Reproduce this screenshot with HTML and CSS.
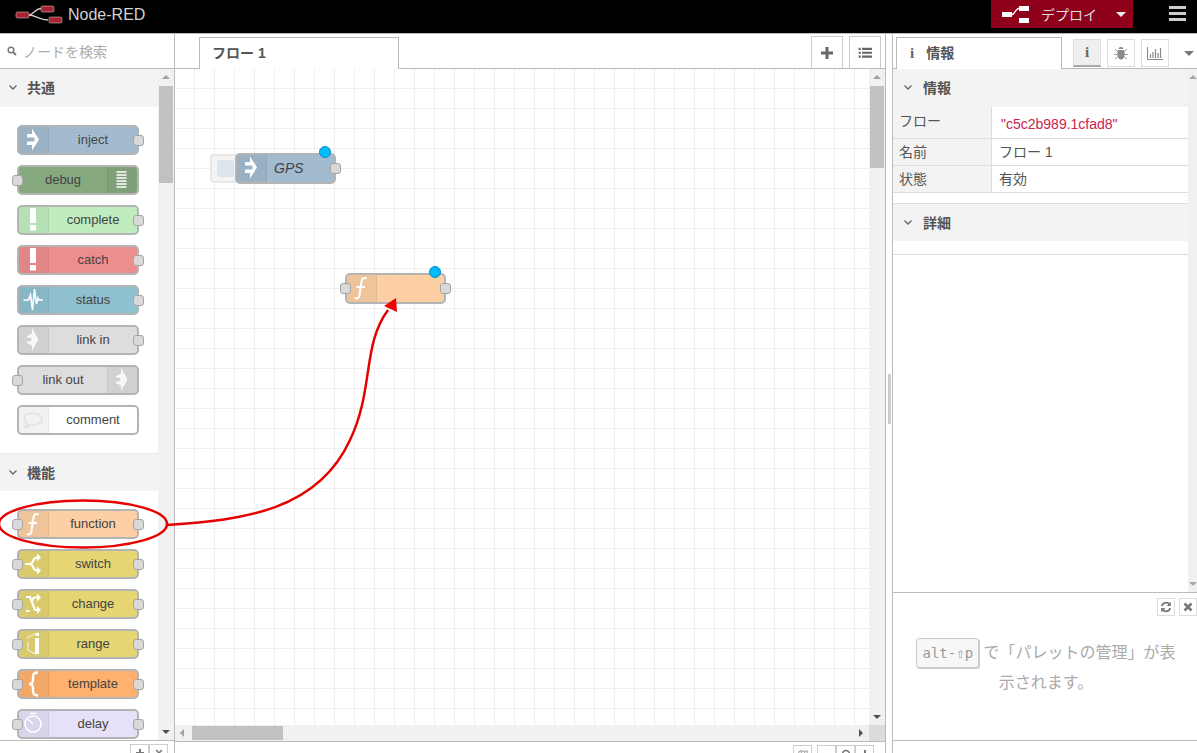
FILE: index.html
```html
<!DOCTYPE html>
<html lang="ja">
<head>
    <meta charset="UTF-8">
    <meta name="viewport" content="width=device-width, initial-scale=1.0">
    <title>Node-RED</title>
    <link rel="stylesheet" href="styles.css">
</head>
<body>

<svg class="defs" width="0" height="0">
    <symbol id="ic-inject" viewBox="0 0 32 30"><path fill="#fff" d="M15 3.500L22 14.500L15 25.500V20H10V16.500H17.500V12.500H10V9H15Z"/></symbol>
    <symbol id="ic-debug" viewBox="0 0 32 30"><path fill="none" stroke="#fff" stroke-width="1.500" d="M10.500 7H20.500M10.500 10H20.500M10.500 13H20.500M10.500 16H20.500M10.500 19H20.500M10.500 22H20.500"/></symbol>
    <symbol id="ic-alert" viewBox="0 0 32 30"><path fill="#fff" d="M13 3H19V18H13ZM13 20H19V25.500H13Z"/></symbol>
    <symbol id="ic-status" viewBox="0 0 32 30"><path fill="none" stroke="#fff" stroke-width="1.600" d="M6.500 15H11.500L13.500 10L15.500 25L17.500 4L19.500 19L21 13L22 15H26"/></symbol>
    <symbol id="ic-link" viewBox="0 0 32 30"><path fill="#fff" opacity=".85" d="M15 3L21.500 14.500L15 26V20.500L10 18V16.500H12.500A2 2 0 0 0 12.500 12.500H10V11L15 8.500Z"/></symbol>
    <symbol id="ic-comment" viewBox="0 0 32 30"><path fill="none" stroke="#ddd" stroke-width="1.200" d="M16 8C22 8 25 11 25 14C25 17.500 21 20 16 20C15 20 14 20 13 19.800C12 21.500 10 22.500 8 22.500C9 21.500 10 20 10 18.500C8 17.500 7 16 7 14C7 11 10 8 16 8Z"/></symbol>
    <symbol id="ic-function" viewBox="0 0 32 30"><path fill="none" stroke="#fff" stroke-width="2" d="M21.500 5.500C18.500 4 17 5.500 16.500 8.500L14.500 22C14 25 12.500 26 10 25M11.500 14H20"/></symbol>
    <symbol id="ic-switch" viewBox="0 0 32 30"><path fill="none" stroke="#fff" stroke-width="2.200" d="M8 15H13C15.500 15 16 12 17 10L19 8.500H21M13 15C15.500 15 16 18 17 20L19 21.500H21"/><path fill="#fff" d="M20 4.500L24 8.500L20 12.500ZM20 17.500L24 21.500L20 25.500Z"/></symbol>
    <symbol id="ic-change" viewBox="0 0 32 30"><path fill="none" stroke="#fff" stroke-width="2.200" d="M9 8H13L18 21H21M9 22H12.500M15 11.500L17 8.500H21"/><path fill="#fff" d="M20 4.500L24 8.500L20 12.500ZM20 17L24 21L20 25Z"/></symbol>
    <symbol id="ic-range" viewBox="0 0 32 30"><path fill="#fff" d="M18 9H22V25H18ZM18.500 4H22V7H18.500Z"/><path fill="none" stroke="#fff" stroke-width="1.200" opacity=".7" d="M11 8V10M11 13V21M11 21L18 25M11 8L18 5"/></symbol>
    <symbol id="ic-template" viewBox="0 0 32 30"><path fill="none" stroke="#fff" stroke-width="2.400" d="M21 3.500C17 3.500 16 5 16 8V11C16 13.500 15 15 12 15C15 15 16 16.500 16 19V22C16 25 17 26.500 21 26.500"/></symbol>
    <symbol id="ic-delay" viewBox="0 0 32 30"><circle cx="16" cy="15" r="8" fill="none" stroke="#fff" stroke-width="1.500"/><path fill="none" stroke="#fff" stroke-width="1.500" d="M16 15L11.500 10.500M13 4.500H19"/></symbol>
    <symbol id="ic-chevron" viewBox="0 0 10 10"><path fill="none" stroke="#666" stroke-width="1.300" d="M1.500 3.500L5 7L8.500 3.500"/></symbol>
    <symbol id="ic-deploy" viewBox="0 0 28 18"><path fill="#fff" d="M0 7H10V12H0ZM17 1H27V6H17ZM17 13H27V18H17Z"/><path fill="none" stroke="#fff" stroke-width="1.300" d="M10 9.500C13 9.500 13 3.500 17 3.500"/></symbol>
    <symbol id="ic-plus" viewBox="0 0 10 10"><path fill="#777" d="M4 1H6V4H9V6H6V9H4V6H1V4H4Z"/></symbol>
    <symbol id="ic-minus" viewBox="0 0 10 10"><path fill="#777" d="M1 4H9V6H1Z"/></symbol>
    <symbol id="ic-close" viewBox="0 0 10 10"><path stroke="#777" stroke-width="1.500" d="M2 2L8 8M8 2L2 8"/></symbol>
    <symbol id="ic-reset" viewBox="0 0 10 10"><circle cx="5" cy="5" r="3.500" fill="none" stroke="#777" stroke-width="1.500"/></symbol>
    <symbol id="ic-map" viewBox="0 0 12 10"><path fill="none" stroke="#888" d="M1 2L4 1L8 2L11 1V9L8 10L4 9L1 10ZM4 1V9M8 2V10"/></symbol>
</svg>

<header class="topbar">
    <div class="brand">
        <svg class="brand-logo" width="48" height="20" viewBox="0 0 48 20">
            <path fill="none" stroke="#ccc" stroke-width="1.300" d="M13 10C19 10 20 3.500 26 3.500M13 10C21 10 24 15 33 15"/>
            <rect x="1" y="7" width="13" height="6" rx="1.500" fill="#a8232f" stroke="#ddd" stroke-width=".5"/>
            <rect x="26" y="1" width="13" height="6" rx="1.500" fill="#a8232f" stroke="#ddd" stroke-width=".5"/>
            <rect x="34" y="12" width="13" height="6" rx="1.500" fill="#a8232f" stroke="#ddd" stroke-width=".5"/>
        </svg>
        <span>Node-RED</span>
    </div>
    <div class="deploy">
        <svg class="deploy-icon" width="28" height="18"><use href="#ic-deploy"/></svg>
        <span class="deploy-label">デプロイ</span>
        <span class="caret caret-white"></span>
    </div>
    <div class="menu-btn"><span></span><span></span><span></span></div>
</header>

<div class="main">
    <aside class="palette">
        <div class="search">
            <svg width="10" height="10" viewBox="0 0 10 10"><circle cx="4" cy="4" r="2.800" fill="none" stroke="#777" stroke-width="1.500"/><path stroke="#777" stroke-width="1.800" d="M6 6L9 9"/></svg>
            <span>ノードを検索</span>
        </div>
        <div class="palette-body">
            <div class="palette-list">
                <div class="category"><svg class="chevron"><use href="#ic-chevron"/></svg>共通</div>
                <div class="category-nodes">
                    <div class="node c-inject"><span class="icon"><svg><use href="#ic-inject"/></svg></span><span class="node-label">inject</span><i class="port port-out"></i></div>
                    <div class="node c-debug"><i class="port port-in"></i><span class="node-label">debug</span><span class="icon icon-right"><svg><use href="#ic-debug"/></svg></span></div>
                    <div class="node c-complete"><span class="icon"><svg><use href="#ic-alert"/></svg></span><span class="node-label">complete</span><i class="port port-out"></i></div>
                    <div class="node c-catch"><span class="icon"><svg><use href="#ic-alert"/></svg></span><span class="node-label">catch</span><i class="port port-out"></i></div>
                    <div class="node c-status"><span class="icon"><svg><use href="#ic-status"/></svg></span><span class="node-label">status</span><i class="port port-out"></i></div>
                    <div class="node c-link"><span class="icon"><svg><use href="#ic-link"/></svg></span><span class="node-label">link in</span><i class="port port-out"></i></div>
                    <div class="node c-link"><i class="port port-in"></i><span class="node-label">link out</span><span class="icon icon-right"><svg><use href="#ic-link"/></svg></span></div>
                    <div class="node c-comment"><span class="icon"><svg><use href="#ic-comment"/></svg></span><span class="node-label">comment</span></div>
                </div>
                <div class="category category-next"><svg class="chevron"><use href="#ic-chevron"/></svg>機能</div>
                <div class="category-nodes">
                    <div class="node c-function"><i class="port port-in"></i><span class="icon"><svg><use href="#ic-function"/></svg></span><span class="node-label">function</span><i class="port port-out"></i></div>
                    <div class="node c-yellow"><i class="port port-in"></i><span class="icon"><svg><use href="#ic-switch"/></svg></span><span class="node-label">switch</span><i class="port port-out"></i></div>
                    <div class="node c-yellow"><i class="port port-in"></i><span class="icon"><svg><use href="#ic-change"/></svg></span><span class="node-label">change</span><i class="port port-out"></i></div>
                    <div class="node c-yellow"><i class="port port-in"></i><span class="icon"><svg><use href="#ic-range"/></svg></span><span class="node-label">range</span><i class="port port-out"></i></div>
                    <div class="node c-template"><i class="port port-in"></i><span class="icon"><svg><use href="#ic-template"/></svg></span><span class="node-label">template</span><i class="port port-out"></i></div>
                    <div class="node c-delay"><i class="port port-in"></i><span class="icon"><svg><use href="#ic-delay"/></svg></span><span class="node-label">delay</span><i class="port port-out"></i></div>
                </div>
            </div>
            <div class="vscroll">
                <span class="arrow arrow-up"></span>
                <span class="thumb thumb-palette"></span>
                <span class="arrow arrow-down"></span>
            </div>
        </div>
        <div class="palette-footer">
            <span class="foot-btn"><svg><use href="#ic-plus"/></svg></span><span class="foot-btn"><svg><use href="#ic-close"/></svg></span>
        </div>
    </aside>

    <section class="workspace">
        <div class="tabbar">
            <div class="tab">フロー 1</div>
            <div class="tabbar-btns">
                <span class="square-btn">
                    <svg width="14" height="14" viewBox="0 0 14 14"><path fill="#666" d="M5.500 1H8.500V5.500H13V8.500H8.500V13H5.500V8.500H1V5.500H5.500Z"/></svg>
                </span>
                <span class="square-btn">
                    <svg width="15" height="12" viewBox="0 0 16 14"><path fill="#666" d="M0 1H2.500V3.500H0ZM4 1H15.500V3.500H4ZM0 5.500H2.500V8H0ZM4 5.500H15.500V8H4ZM0 10H2.500V12.500H0ZM4 10H15.500V12.500H4Z"/></svg>
                </span>
            </div>
        </div>
        <div class="canvas-row">
            <div class="chart">
                <div class="flow-node flow-gps">
                    <span class="inject-btn"><span></span></span>
                    <div class="node c-inject"><span class="icon"><svg><use href="#ic-inject"/></svg></span><span class="node-label flow-label">GPS</span><i class="port port-out"></i><b class="changed"></b></div>
                </div>
                <div class="flow-node flow-func">
                    <div class="node c-function"><i class="port port-in"></i><span class="icon"><svg><use href="#ic-function"/></svg></span><span class="node-label"></span><i class="port port-out"></i><b class="changed"></b></div>
                </div>
            </div>
            <div class="vscroll">
                <span class="arrow arrow-up"></span>
                <span class="thumb thumb-chart"></span>
                <span class="arrow arrow-down"></span>
            </div>
        </div>
        <div class="hscroll">
            <span class="arrow arrow-left"></span>
            <span class="thumb thumb-h"></span>
            <span class="arrow arrow-right"></span>
            <span class="scroll-corner"></span>
        </div>
        <div class="workspace-footer">
            <span class="foot-btn"><svg><use href="#ic-map"/></svg></span>
            <span class="zoom-group">
                <span class="foot-btn"><svg><use href="#ic-minus"/></svg></span><span class="foot-btn"><svg><use href="#ic-reset"/></svg></span><span class="foot-btn"><svg><use href="#ic-plus"/></svg></span>
            </span>
        </div>
    </section>

    <div class="splitter"><span></span></div>

    <aside class="sidebar">
        <div class="tabbar tabbar-side">
            <div class="tab tab-side"><span class="info-i info-i-tab">i</span>情報</div>
            <div class="side-btns">
                <span class="side-btn side-btn-active"><span class="info-i">i</span></span>
                <span class="side-btn">
                    <svg width="14" height="14" viewBox="0 0 14 14"><path fill="#8a8a8a" d="M4.500 3A2.500 2 0 0 1 9.500 3ZM4 4H10C11 6 11 10 10 11.500C9 13 8 13.500 7 13.500C6 13.500 5 13 4 11.500C3 10 3 6 4 4Z"/><path stroke="#999" fill="none" d="M1 3L3.500 5.500M13 3L10.500 5.500M0 8.500H3M14 8.500H11M1 13L3.500 11M13 13L10.500 11"/></svg>
                </span>
                <span class="side-btn">
                    <svg width="16" height="14" viewBox="0 0 16 14"><path fill="none" stroke="#888" d="M.500 1V13.500H16"/><path fill="none" stroke="#888" stroke-width="1.200" d="M3.500 12V8M6 12V6M8.500 12V3M11 12V7M13.500 12V2"/></svg>
                </span>
            </div>
            <span class="caret caret-side"></span>
        </div>
        <div class="side-upper">
            <div class="side-content">
                <div class="side-section"><svg class="chevron"><use href="#ic-chevron"/></svg>情報</div>
                <table class="info-table">
                    <tr class="row-id"><th>フロー</th><td class="flow-id">"c5c2b989.1cfad8"</td></tr>
                    <tr><th>名前</th><td>フロー 1</td></tr>
                    <tr><th>状態</th><td>有効</td></tr>
                </table>
                <div class="side-section side-section-next"><svg class="chevron"><use href="#ic-chevron"/></svg>詳細</div>
                <div class="side-rest"></div>
            </div>
            <div class="side-scroll">
                <span class="arrow arrow-up arrow-pale"></span>
                <span class="arrow arrow-down arrow-pale"></span>
            </div>
        </div>
        <div class="tips">
            <div class="tips-btns">
                <span class="tip-btn">
                    <svg width="12" height="12" viewBox="0 0 12 12"><path fill="none" stroke="#777" stroke-width="1.800" d="M1.800 5A4.300 4.300 0 0 1 9.500 3.500M10.200 7A4.300 4.300 0 0 1 2.500 8.500"/><path fill="#777" d="M10.800 .8V5H6.600ZM1.200 11.200V7H5.400Z"/></svg>
                </span>
                <span class="tip-btn">
                    <svg width="10" height="10" viewBox="0 0 10 10"><path stroke="#777" stroke-width="2.600" d="M1.500 1.500L8.500 8.500M8.500 1.500L1.500 8.500"/></svg>
                </span>
            </div>
            <p class="tip-text"><kbd>alt-⇧p</kbd> で「パレットの管理」が表示されます。</p>
        </div>
        <div class="side-footer"></div>
    </aside>
</div>

<!-- annotation drawn over the screenshot -->
<svg class="annotation" width="1197" height="753" viewBox="0 0 1197 753">
    <ellipse cx="83" cy="524" rx="84" ry="23.500" fill="none" stroke="#e60000" stroke-width="2.500"/>
    <path fill="none" stroke="#e60000" stroke-width="2.500" d="M167 525C245 520 318 510 350 440C374 390 362 345 388 310"/>
    <path fill="#f00000" d="M396 298L397 312L384 306Z"/>
</svg>

</body>
</html>
```

FILE: styles.css
```css
* {
    box-sizing: border-box;
}

html,
body {
    margin: 0;
    height: 100%;
    overflow: hidden;
}

body {
    position: relative;
    font-family: "Liberation Sans", "Noto Sans CJK JP", sans-serif;
    font-size: 14px;
    color: #555;
    background-color: #fff;
}

.defs {
    position: absolute;
}

/* header */
.topbar {
    display: flex;
    align-items: flex-start;
    height: 34px;
    background-color: #000;
    border-bottom: 1px solid #bbb;
}

.brand {
    display: flex;
    align-items: center;
    gap: 5px;
    height: 30px;
    padding-left: 15px;
    margin-right: auto;
    font-size: 16px;
    color: #d2d2d2;
}

.deploy {
    display: flex;
    align-items: center;
    width: 142px;
    height: 28px;
    padding-left: 11px;
    background-color: #8f001b;
    color: #ddd;
}

.deploy-label {
    margin-left: 11px;
    margin-right: 19px;
}

.menu-btn {
    display: flex;
    flex-direction: column;
    gap: 3px;
    width: 17px;
    margin: 6px 11px 0 36px;
}

.menu-btn span {
    height: 3px;
    background-color: #ccc;
}

.caret {
    width: 0;
    height: 0;
    border-left: 5px solid transparent;
    border-right: 5px solid transparent;
    border-top: 5px solid #777;
}

.caret-white {
    border-top-color: #eee;
}

/* layout */
.main {
    display: flex;
    height: 719px;
}

.palette {
    display: flex;
    flex-direction: column;
    width: 175px;
    border-right: 1px solid #bbb;
}

.search {
    display: flex;
    align-items: center;
    gap: 6px;
    height: 35px;
    padding-left: 7px;
    border-bottom: 1px solid #bbb;
    color: #aaa;
}

.palette-body {
    display: flex;
    height: 672px;
    border-bottom: 1px solid #bbb;
}

.palette-list {
    width: 158px;
    overflow: hidden;
}

.category {
    display: flex;
    align-items: center;
    height: 38px;
    padding: 0 0 2px 8px;
    background-color: #f3f3f3;
    font-weight: bold;
    font-size: 14px;
    color: #555;
}

.category-next {
    border-top: 1px solid #e8e8e8;
}

.chevron {
    width: 10px;
    height: 10px;
    margin-right: 9px;
}

.category-nodes {
    display: flex;
    flex-direction: column;
    gap: 10px;
    padding: 18px 0 18px 17px;
}

/* nodes */
.node {
    position: relative;
    display: flex;
    align-items: center;
    width: 122px;
    height: 30px;
    border: 2px solid #b4b4b4;
    border-radius: 5px;
}

.icon {
    flex: none;
    width: 30px;
    height: 100%;
    background-color: rgba(0, 0, 0, 0.05);
    border-right: 1px solid rgba(0, 0, 0, 0.05);
    border-radius: 3px 0 0 3px;
}

.icon-right {
    border-right: none;
    border-left: 1px solid rgba(0, 0, 0, 0.05);
    border-radius: 0 3px 3px 0;
}

/* the symbols are drawn on the outer 32x30 box of the node */
.icon svg {
    display: block;
    width: 32px;
    height: 30px;
    margin: -2px 0 0 -2px;
    overflow: visible;
}

.node-label {
    flex: 1;
    padding-bottom: 2px;
    text-align: center;
    color: #444;
    font-size: 13px;
}

.port {
    position: absolute;
    top: 8px;
    width: 11px;
    height: 11px;
    background-color: #d9d9d9;
    border: 1px solid #a5a5a5;
    border-radius: 3px;
}

.port-in {
    left: -7px;
}

.port-out {
    right: -7px;
}

.c-inject { background-color: #a3bbcf; }
.c-debug { background-color: #87a980; }
.c-complete { background-color: #c0edc0; }
.c-catch { background-color: #ec8e8e; }
.c-status { background-color: #8fc1d0; }
.c-link { background-color: #ddd; }
.c-comment { background-color: #fff; }
.c-function { background-color: #fdcfa4; }
.c-yellow { background-color: #e5d673; }
.c-template { background-color: #ffb16d; }
.c-delay { background-color: #e6e0f8; }

/* scrollbars */
.vscroll {
    position: relative;
    flex: none;
    width: 16px;
    background-color: #f1f1f1;
}

.thumb {
    position: absolute;
    background-color: #c1c1c1;
}

.thumb-palette {
    top: 17px;
    left: 1px;
    width: 14px;
    height: 97px;
}

.thumb-chart {
    top: 17px;
    left: 1px;
    width: 14px;
    height: 82px;
}

.thumb-h {
    top: 1px;
    left: 17px;
    width: 91px;
    height: 14px;
}

.arrow {
    position: absolute;
    width: 0;
    height: 0;
}

.arrow-up {
    top: 6px;
    left: 4px;
    border-left: 4px solid transparent;
    border-right: 4px solid transparent;
    border-bottom: 4px solid #a3a3a3;
}

.arrow-down {
    bottom: 6px;
    left: 4px;
    border-left: 4px solid transparent;
    border-right: 4px solid transparent;
    border-top: 4px solid #505050;
}

.arrow-left {
    top: 4px;
    left: 5px;
    border-top: 4px solid transparent;
    border-bottom: 4px solid transparent;
    border-right: 4px solid #a3a3a3;
}

.arrow-right {
    top: 4px;
    right: 22px;
    border-top: 4px solid transparent;
    border-bottom: 4px solid transparent;
    border-left: 4px solid #505050;
}

.arrow-pale {
    left: 1px;
    border-bottom-color: #aaa;
    border-top-color: #aaa;
}

/* workspace */
.workspace {
    display: flex;
    flex-direction: column;
    width: 710px;
}

.tabbar {
    display: flex;
    align-items: flex-end;
    height: 35px;
    padding-left: 24px;
    border-bottom: 1px solid #bbb;
}

.tab {
    position: relative;
    top: 1px;
    flex: none;
    width: 200px;
    height: 32px;
    padding: 4px 0 0 12px;
    background-color: #fff;
    border: 1px solid #bbb;
    border-bottom: none;
    font-weight: bold;
    font-size: 14px;
    color: #555;
}

.tabbar-btns {
    display: flex;
    gap: 6px;
    margin-left: auto;
    margin-right: 4px;
}

.square-btn {
    display: flex;
    align-items: center;
    justify-content: center;
    width: 32px;
    height: 32px;
    border: 1px solid #ccc;
    border-bottom: none;
}

.canvas-row {
    display: flex;
    height: 656px;
}

.chart {
    position: relative;
    flex: 1;
    overflow: hidden;
    background-color: #fff;
    background-image:
        linear-gradient(#eee 1px, transparent 1px),
        linear-gradient(90deg, #eee 1px, transparent 1px);
    background-size: 20px 20px;
    background-position: 19px 19px;
}

.hscroll {
    position: relative;
    height: 16px;
    background-color: #f1f1f1;
}

.scroll-corner {
    position: absolute;
    top: 0;
    right: 0;
    width: 16px;
    height: 16px;
    background-color: #dcdcdc;
}

.workspace-footer {
    display: flex;
    justify-content: flex-end;
    gap: 5px;
    height: 12px;
    padding: 3px 11px 0 0;
    border-top: 1px solid #bbb;
    overflow: hidden;
}

.palette-footer {
    display: flex;
    justify-content: flex-end;
    height: 12px;
    padding: 3px 6px 0 0;
    overflow: hidden;
}

.foot-btn {
    display: block;
    width: 19px;
    height: 20px;
    padding: 3px 0 0 4px;
    background-color: #fff;
    border: 1px solid #ccc;
}

.foot-btn svg {
    display: block;
    width: 10px;
    height: 10px;
}

.zoom-group {
    display: flex;
}

.flow-node {
    position: absolute;
}

.flow-gps {
    left: 35px;
    top: 84px;
    display: flex;
}

.flow-func {
    left: 170px;
    top: 204px;
}

.flow-node .node {
    width: 101px;
    height: 31px;
}

.flow-label {
    font-size: 14px;
    font-style: italic;
    text-align: left;
    padding-left: 7px;
}

.inject-btn {
    display: flex;
    align-items: center;
    justify-content: center;
    width: 26px;
    height: 29px;
    margin-top: 1px;
    margin-right: -1px;
    background-color: #f4f4f4;
    border: 2px solid #e8e8e8;
    border-right: none;
    border-radius: 4px 0 0 4px;
}

.inject-btn span {
    width: 17px;
    height: 17px;
    margin-left: 2px;
    background-color: #dde5ec;
    border-radius: 3px;
}

.changed {
    position: absolute;
    top: -9px;
    right: 3px;
    width: 12px;
    height: 12px;
    background-color: #00bcff;
    border: 1px solid #0a8fc0;
    border-radius: 50%;
}

/* splitter */
.splitter {
    display: flex;
    align-items: center;
    justify-content: center;
    flex: none;
    width: 8px;
    background-color: #fff;
    border-left: 1px solid #bbb;
    border-right: 1px solid #bbb;
}

.splitter span {
    width: 3px;
    height: 50px;
    margin-top: 10px;
    background-color: #ccc;
}

/* sidebar */
.sidebar {
    display: flex;
    flex-direction: column;
    flex: 1;
    min-width: 0;
}

.tabbar-side {
    padding-left: 3px;
    align-items: flex-end;
}

.tab-side {
    width: 166px;
    padding-left: 13px;
}

.info-i {
    font-family: "Liberation Serif", serif;
    font-weight: bold;
    font-size: 15px;
    color: #666;
}

.info-i-tab {
    margin-right: 12px;
}

.side-btns {
    display: flex;
    gap: 6px;
    margin-left: 11px;
    margin-bottom: 1px;
}

.side-btn {
    display: flex;
    align-items: center;
    justify-content: center;
    width: 28px;
    height: 28px;
    border: 1px solid #ddd;
}

.side-btn-active {
    background-color: #efefef;
    border-bottom: 2px solid #aaa;
}

.caret-side {
    margin: 0 4px 12px 15px;
}

.side-upper {
    display: flex;
    height: 523px;
}

.side-content {
    width: 295px;
    display: flex;
    flex-direction: column;
}

.side-section {
    display: flex;
    align-items: center;
    flex: none;
    height: 38px;
    padding: 0 0 2px 10px;
    background-color: #f3f3f3;
    font-weight: bold;
    font-size: 14px;
    color: #555;
}

.side-section .chevron {
    margin-right: 10px;
}

.side-section-next {
    margin-top: 10px;
    border-top: 1px solid #ddd;
}

.info-table {
    width: 100%;
    border-collapse: separate;
    border-spacing: 0;
    table-layout: fixed;
    font-size: 14px;
}

.info-table th,
.info-table td {
    height: 27px;
    padding: 0 0 2px 6px;
    border-bottom: 1px solid #ddd;
    font-weight: normal;
    text-align: left;
}

.info-table th {
    width: 99px;
    background-color: #f3f3f3;
    border-right: 1px solid #ddd;
}

.info-table td {
    padding-left: 7px;
}

.row-id th,
.row-id td {
    height: 32px;
}

.row-id th {
    padding-bottom: 6px;
}

.info-table .flow-id {
    padding: 3px 0 0 9px;
    color: #c7254e;
}

.side-rest {
    height: 14px;
    border-bottom: 1px solid #ddd;
}

.side-scroll {
    position: relative;
    flex: 1;
    background-color: #f1f1f1;
}

.tips {
    position: relative;
    height: 149px;
    border-top: 1px solid #bbb;
    border-bottom: 1px solid #bbb;
}

.tips-btns {
    position: absolute;
    top: 5px;
    right: 0;
    display: flex;
    gap: 4px;
}

.tip-btn {
    display: flex;
    align-items: center;
    justify-content: center;
    width: 18px;
    height: 18px;
    border: 1px solid #ddd;
}

.tip-text {
    margin: 45px 0 0;
    padding: 0 20px 0 22px;
    font-size: 16px;
    line-height: 30px;
    text-align: center;
    color: #aaa;
}

kbd {
    display: inline-block;
    height: 30px;
    padding: 0 5px;
    font-family: "DejaVu Sans Mono", "Liberation Mono", monospace;
    font-size: 14px;
    line-height: 28px;
    color: #999;
    background-color: #f7f7f7;
    border: 1px solid #ccc;
    border-radius: 3px;
    box-shadow: 1px 1px 0 #ccc;
}

.side-footer {
    flex: 1;
}

.annotation {
    position: absolute;
    left: 0;
    top: 0;
    pointer-events: none;
}
```
